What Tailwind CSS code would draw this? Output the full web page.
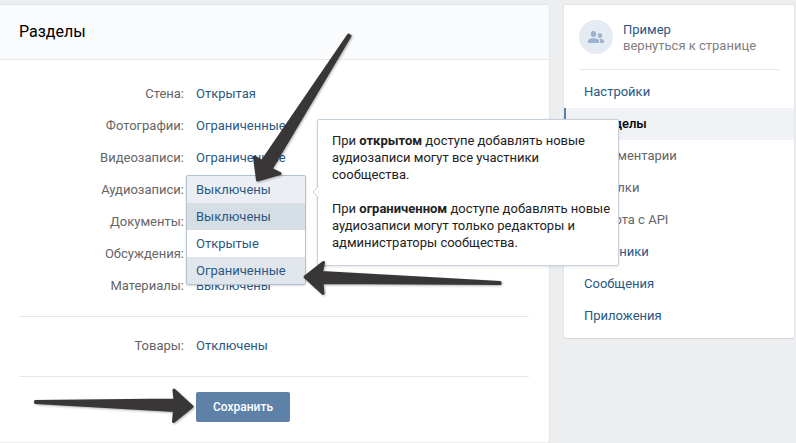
<!DOCTYPE html>
<html lang="ru">
<head>
    <meta charset="UTF-8">
    <meta name="viewport" content="width=device-width, initial-scale=1.0">
    <title>Разделы</title>
    <script src="https://cdn.jsdelivr.net/npm/@tailwindcss/browser@4"></script>
</head>
<body class="bg-[#edeef0] font-[Roboto,sans-serif] text-[13px] text-black">
    <div class="relative flex items-start gap-[15px] pt-[5px] pr-[2px]">
        <main class="flex-1 bg-white rounded-r-xs shadow-[0_1px_0_0_#d7d8db,0_0_0_1px_#e3e4e8]">
            <h1 class="h-[55px] flex items-center pl-[19px] bg-[#fafbfc] border-b border-[#e7e8ec] text-base">Разделы</h1>
            <form class="pt-[18px] pb-5">
                <div class="flex items-center gap-3 h-8">
                    <label for="wall" class="w-[184px] text-right text-[#656565]">Стена:</label>
                    <select id="wall" class="appearance-none outline-none text-[#2a5885] cursor-pointer">
                        <option>Открытая</option>
                    </select>
                </div>
                <div class="flex items-center gap-3 h-8">
                    <label for="photos" class="w-[184px] text-right text-[#656565]">Фотографии:</label>
                    <select id="photos" class="appearance-none outline-none text-[#2a5885] cursor-pointer">
                        <option>Ограниченные</option>
                    </select>
                </div>
                <div class="flex items-center gap-3 h-8">
                    <label for="video" class="w-[184px] text-right text-[#656565]">Видеозаписи:</label>
                    <select id="video" class="appearance-none outline-none text-[#2a5885] cursor-pointer">
                        <option>Ограниченные</option>
                    </select>
                </div>
                <div class="flex items-center gap-3 h-8">
                    <label for="audio" class="w-[184px] text-right text-[#656565]">Аудиозаписи:</label>
                    <div class="relative h-8">
                        <!-- открытое меню -->
                        <div class="absolute z-10 top-px -left-[10px] w-[120px] border border-[#b3c0ce] rounded-xs bg-white text-[#2a5885] shadow-[0_1px_2px_rgba(0,0,0,0.15)]">
                            <button id="audio" type="button" aria-haspopup="listbox" aria-expanded="true" class="block w-full h-[27px] px-[9px] text-left bg-[#ebeff4] cursor-pointer">Выключены</button>
                            <ul role="listbox" aria-label="Аудиозаписи" class="leading-[27px] cursor-pointer">
                                <li role="option" aria-selected="true" class="px-[9px] bg-[#d5dde5]">Выключены</li>
                                <li role="option" class="px-[9px]">Открытые</li>
                                <li role="option" class="px-[9px] bg-[#e1e6ed]">Ограниченные</li>
                            </ul>
                        </div>
                        <!-- подсказка -->
                        <div role="tooltip" class="absolute z-10 -top-[55px] left-[121px] w-[302px] pl-[14px] pr-[6px] pt-3 pb-[14px] border border-[#c5d0db] rounded-xs bg-white leading-[17px] text-[#222] shadow-[0_1px_3px_rgba(0,0,0,0.1)]">
                            <svg class="absolute top-[66px] -left-[6px]" width="7" height="12" viewBox="0 0 7 12" fill="#fff">
                                <path d="M6.5 0.5 L1 6 L6.5 11.5" stroke="#c5d0db"/>
                            </svg>
                            <p>При <b class="font-bold">открытом</b> доступе добавлять новые аудиозаписи могут все участники сообщества.</p>
                            <p class="mt-[17px]">При <b class="font-bold">ограниченном</b> доступе добавлять новые аудиозаписи могут только редакторы и администраторы сообщества.</p>
                        </div>
                    </div>
                </div>
                <div class="flex items-center gap-3 h-8">
                    <label for="docs" class="w-[184px] text-right text-[#656565]">Документы:</label>
                    <select id="docs" class="appearance-none outline-none text-[#2a5885] cursor-pointer">
                        <option>Открытые</option>
                    </select>
                </div>
                <div class="flex items-center gap-3 h-8">
                    <label for="board" class="w-[184px] text-right text-[#656565]">Обсуждения:</label>
                    <select id="board" class="appearance-none outline-none text-[#2a5885] cursor-pointer">
                        <option>Открытые</option>
                    </select>
                </div>
                <div class="flex items-center gap-3 h-8">
                    <label for="wiki" class="w-[184px] text-right text-[#656565]">Материалы:</label>
                    <select id="wiki" class="appearance-none outline-none text-[#2a5885] cursor-pointer">
                        <option>Выключены</option>
                    </select>
                </div>
                <div class="ml-[19px] mr-5 mt-[14px] pt-[13px] pb-[14px] border-y border-[#e7e8ec]">
                    <div class="flex items-center gap-3 h-8">
                        <label for="market" class="w-[165px] text-right text-[#656565]">Товары:</label>
                        <select id="market" class="appearance-none outline-none text-[#2a5885] cursor-pointer">
                            <option>Отключены</option>
                        </select>
                    </div>
                </div>
                <button type="submit" class="block mt-[15px] ml-[196px] h-[30px] px-[17px] rounded-xs bg-[#5e81a8] text-white font-medium text-xs hover:opacity-90 cursor-pointer">Сохранить</button>
            </form>
        </main>

        <aside class="w-[230px] pb-[6px] bg-white rounded-xs shadow-[0_1px_0_0_#d7d8db,0_0_0_1px_#e3e4e8]">
            <a href="#" class="flex items-center gap-[10px] mx-[15px] pt-[15px] pb-[15px] border-b border-[#e7e8ec]">
                <span class="flex items-center justify-center size-[34px] rounded-full bg-[#e4ebf3]">
                    <svg width="16" height="12" viewBox="0 0 16 12" fill="#9bb2cf">
                        <ellipse cx="5.5" cy="3" rx="2.7" ry="3"/>
                        <path d="M0 12v-1.500C0 8.300 2.500 7.300 5.500 7.300S11 8.300 11 10.500V12z"/>
                        <ellipse cx="12" cy="4.500" rx="2.100" ry="2.500"/>
                        <path d="M12.200 12v-1.500c0-1.200-.5-2.100-1.200-2.700 2.700-.5 5 .6 5 2.700V12z"/>
                    </svg>
                </span>
                <span class="flex flex-col pt-0.5 leading-4">
                    <span class="text-[#2a5885]">Пример</span>
                    <span class="text-[#808080]">вернуться к странице</span>
                </span>
            </a>
            <nav class="flex flex-col mt-[6px] leading-8 text-[#2a5885]">
                <a href="#" class="px-5">Настройки</a>
                <a href="#" class="pl-[26px] border-l-2 border-[#5e81a8] bg-[#f0f2f5] text-black font-medium">Разделы</a>
                <a href="#" class="px-7 text-[#656565]">Комментарии</a>
                <a href="#" class="px-7 text-[#656565]">Ссылки</a>
                <a href="#" class="px-7 text-[#656565]">Работа с API</a>
                <a href="#" class="px-5">Участники</a>
                <a href="#" class="px-5">Сообщения</a>
                <a href="#" class="px-5">Приложения</a>
            </nav>
        </aside>

        <!-- стрелки поверх страницы -->
        <svg class="absolute z-20 top-0 left-0 pointer-events-none drop-shadow-[1px_1px_1px_rgba(0,0,0,0.3)]" width="510" height="430" viewBox="0 0 510 430" fill="#383637" stroke="#383637" stroke-width="3" stroke-linejoin="round">
            <path d="M348.500 35 L350 36 L271 169 L280 173.500 L257.500 180 L254.500 157 L262 161.500 Z"/>
            <path d="M500 282.500 L500 283.500 L322 282.500 L323 293.500 L305 277 L323.500 262.500 L321.500 272.500 Z"/>
            <path d="M35.500 401.500 L35.500 402.500 L174.500 410.500 L173.500 421.500 L192 406.500 L174 390 L175 400 Z"/>
        </svg>
    </div>
</body>
</html>
